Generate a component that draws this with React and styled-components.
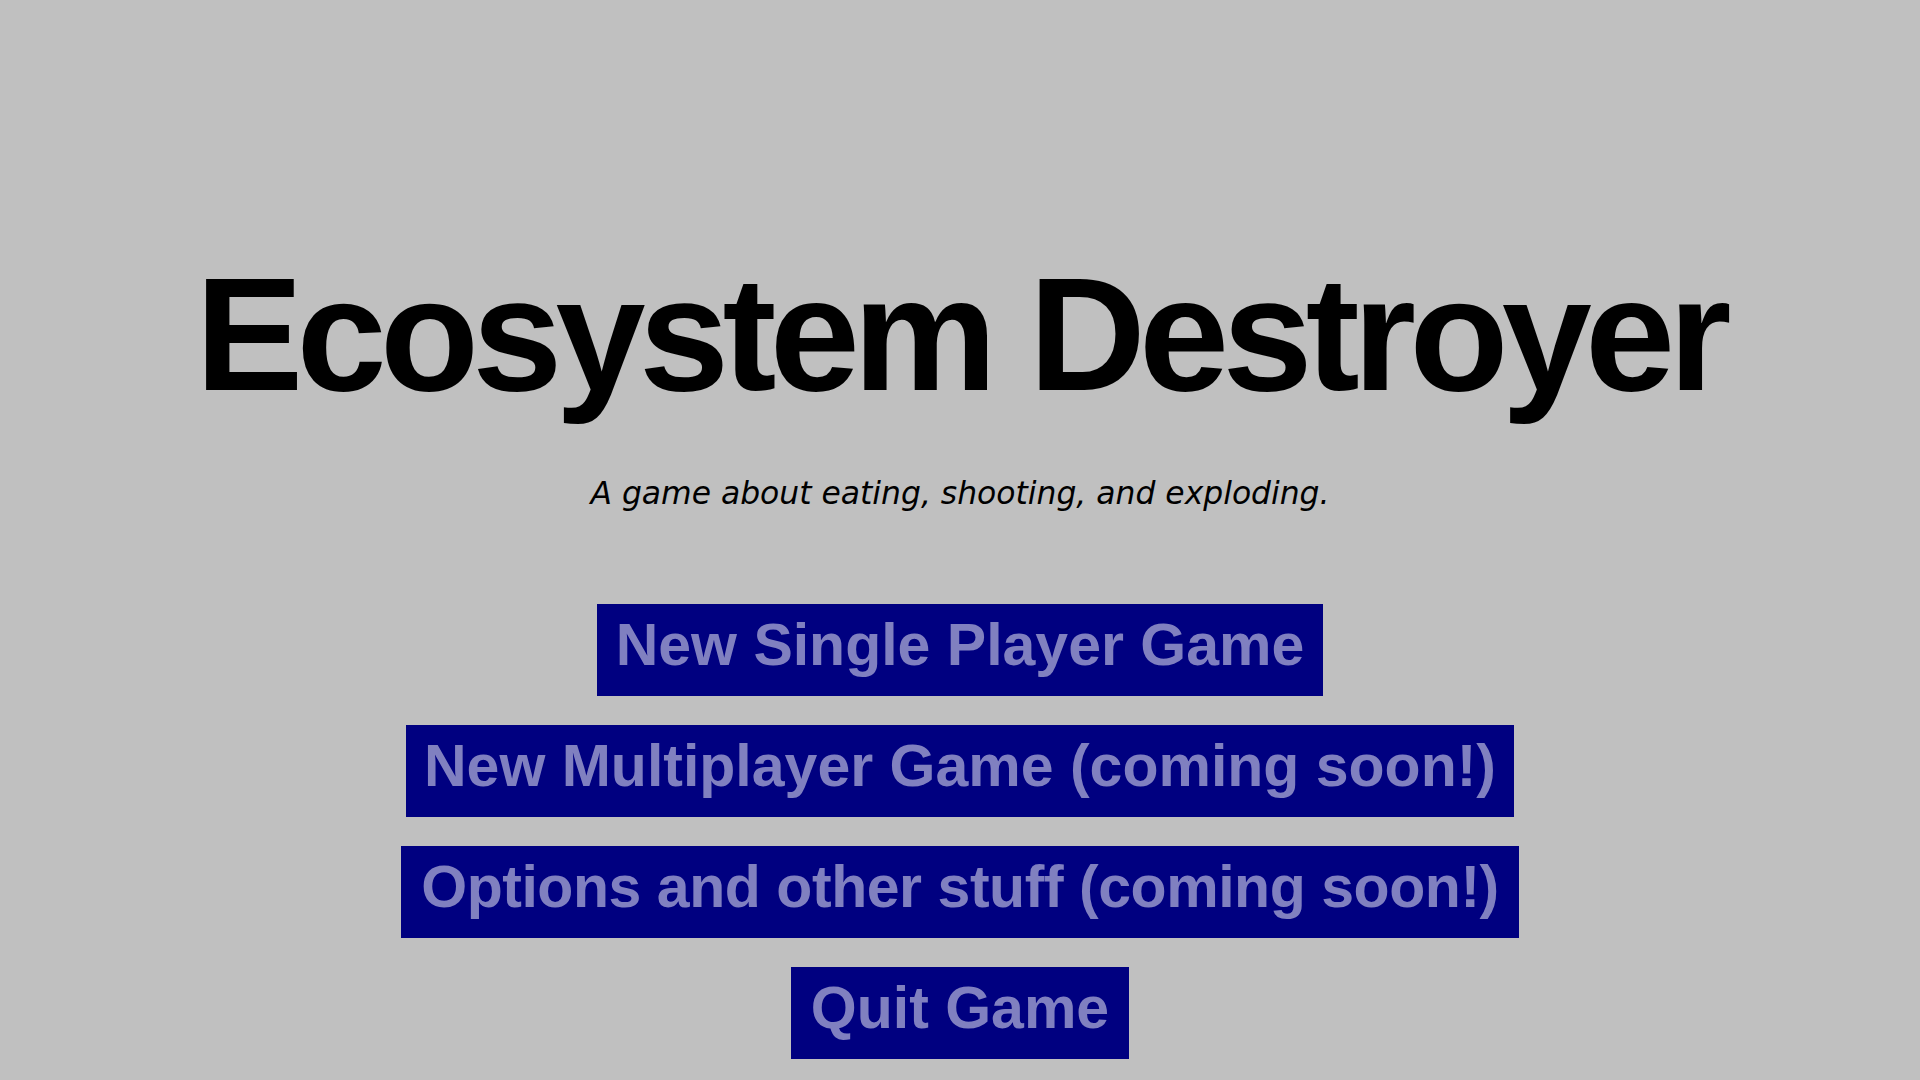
import React from "react";
import styled, { createGlobalStyle } from "styled-components";

const GlobalStyle = createGlobalStyle`
  html, body {
    margin: 0;
    padding: 0;
    background: #c0c0c0;
  }
  body {
    font-family: "Liberation Sans", Arial, sans-serif;
  }
`;

const Menu = styled.main`
  width: 100%;
  min-height: 1080px;
  display: flex;
  flex-direction: column;
  align-items: center;
  padding-top: 241px;
  box-sizing: border-box;
`;

const Title = styled.h1`
  margin: 0;
  font-family: "Liberation Sans", Arial, sans-serif;
  font-size: 162px;
  font-weight: 700;
  line-height: 186px;
  letter-spacing: -6.7px;
  color: #000;
`;

const Tagline = styled.p`
  margin: 48px 0 0;
  font-family: "DejaVu Sans", Verdana, sans-serif;
  font-size: 31.4px;
  font-style: oblique;
  line-height: 36px;
  color: #000;
`;

const ButtonList = styled.nav`
  margin-top: 93px;
  display: flex;
  flex-direction: column;
  align-items: center;
  gap: 29px;
`;

const MenuButton = styled.button`
  display: block;
  border: none;
  border-radius: 0;
  margin: 0;
  padding: 7px ${(props) => props.$pad || 18}px 17px;
  background: #000080;
  color: #8080c0;
  font-family: "Liberation Sans", Arial, sans-serif;
  font-size: 59px;
  font-weight: 700;
  line-height: 68px;
  letter-spacing: ${(props) => props.$spacing || 0}px;
  white-space: nowrap;
  cursor: pointer;
`;

const App = () => {
  return (
    <>
      <GlobalStyle />
      <Menu>
        <Title>Ecosystem Destroyer</Title>
        <Tagline>A game about eating, shooting, and exploding.</Tagline>
        <ButtonList>
          <MenuButton $pad={19}>New Single Player Game</MenuButton>
          <MenuButton $pad={18}>New Multiplayer Game (coming soon!)</MenuButton>
          <MenuButton $pad={20} $spacing={-0.45}>
            Options and other stuff (coming soon!)
          </MenuButton>
          <MenuButton $pad={20}>Quit Game</MenuButton>
        </ButtonList>
      </Menu>
    </>
  );
};

export default App;
